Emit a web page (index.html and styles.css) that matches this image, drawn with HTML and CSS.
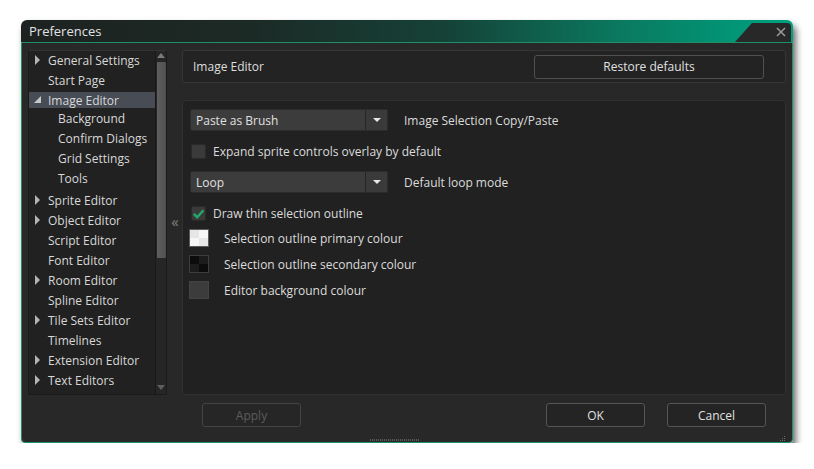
FILE: index.html
```html
<!DOCTYPE html>
<html>
<head>
<meta charset="utf-8">
<title>Preferences</title>
<link rel="stylesheet" href="styles.css">
</head>
<body>
<div class="window">
  <div class="titlebar">
    <span class="title">Preferences</span>
    <div class="notch">
      <svg class="close" width="10" height="10" viewBox="0 0 10 10"><path d="M1 1 L9 9 M9 1 L1 9" stroke="#a0a0a0" stroke-width="1.4" fill="none"/></svg>
    </div>
  </div>
  <div class="frame">
    <div class="main">
      <div class="tree">
        <div class="tree-items">
          <div class="row"><span class="tw closed"></span>General Settings</div>
          <div class="row"><span class="tw"></span>Start Page</div>
          <div class="row selected"><span class="tw open"></span>Image Editor</div>
          <div class="children">
            <div class="row child">Background</div>
            <div class="row child">Confirm Dialogs</div>
            <div class="row child">Grid Settings</div>
            <div class="row child">Tools</div>
          </div>
          <div class="row"><span class="tw closed"></span>Sprite Editor</div>
          <div class="row"><span class="tw closed"></span>Object Editor</div>
          <div class="row"><span class="tw"></span>Script Editor</div>
          <div class="row"><span class="tw"></span>Font Editor</div>
          <div class="row"><span class="tw closed"></span>Room Editor</div>
          <div class="row"><span class="tw"></span>Spline Editor</div>
          <div class="row"><span class="tw closed"></span>Tile Sets Editor</div>
          <div class="row"><span class="tw"></span>Timelines</div>
          <div class="row"><span class="tw closed"></span>Extension Editor</div>
          <div class="row"><span class="tw closed"></span>Text Editors</div>
        </div>
        <div class="scrollbar">
          <span class="sb-up"></span>
          <div class="sb-thumb"></div>
          <span class="sb-down"></span>
        </div>
      </div>
      <div class="splitter">«</div>
      <div class="right">
        <div class="header">
          <span class="header-title">Image Editor</span>
          <button class="btn restore">Restore defaults</button>
        </div>
        <div class="content">
          <div class="opt drop-row">
            <div class="dropdown"><span class="dd-text">Paste as Brush</span><span class="dd-arrow"><span class="tri"></span></span></div>
            <span class="label">Image Selection Copy/Paste</span>
          </div>
          <div class="opt check-row r1">
            <span class="check"></span>
            <span class="label">Expand sprite controls overlay by default</span>
          </div>
          <div class="opt drop-row r2">
            <div class="dropdown"><span class="dd-text">Loop</span><span class="dd-arrow"><span class="tri"></span></span></div>
            <span class="label">Default loop mode</span>
          </div>
          <div class="opt check-row r3">
            <span class="check on"><svg width="13" height="13" viewBox="0 0 13 13"><path d="M1.8 6.8 L5.2 10.2 L11.4 3.2" stroke="#22a86c" stroke-width="2.4" fill="none"/></svg></span>
            <span class="label">Draw thin selection outline</span>
          </div>
          <div class="opt swatch-row r4">
            <span class="swatch light"></span>
            <span class="label">Selection outline primary colour</span>
          </div>
          <div class="opt swatch-row r5">
            <span class="swatch dark"></span>
            <span class="label">Selection outline secondary colour</span>
          </div>
          <div class="opt swatch-row r5">
            <span class="swatch plain"></span>
            <span class="label">Editor background colour</span>
          </div>
        </div>
      </div>
    </div>
    <div class="buttons">
      <button class="btn apply" disabled>Apply</button>
      <span class="spacer"></span>
      <button class="btn ok">OK</button>
      <button class="btn cancel">Cancel</button>
    </div>
    <div class="footer">
      <span class="grip"></span>
      <svg class="resize" width="7" height="7" viewBox="0 0 7 7"><g fill="#6a6a6a"><rect x="5" y="1" width="1" height="1"/><rect x="3" y="3" width="1" height="1"/><rect x="5" y="3" width="1" height="1"/><rect x="1" y="5" width="1" height="1"/><rect x="3" y="5" width="1" height="1"/><rect x="5" y="5" width="1" height="1"/></g></svg>
    </div>
  </div>
</div>
</body>
</html>
```

FILE: styles.css
```css
* { box-sizing: border-box; }

body {
  margin: 0;
  padding: 20px 0 0 21px;
  background: #ffffff;
  font-family: "Open Sans", "Noto Sans", sans-serif;
  font-size: 12px;
  color: #dcdcdc;
}

.window {
  width: 772px;
  border-radius: 6px 6px 4px 4px;
  box-shadow: 3px 5px 7px rgba(0, 0, 0, 0.6);
}

.titlebar {
  position: relative;
  height: 22px;
  display: flex;
  align-items: center;
  padding-left: 8px;
  border-radius: 6px 6px 0 0;
  background: linear-gradient(to right, #1d2220 0%, #1c2a26 30%, #154237 55%, #0a7a60 78%, #009c7c 96%, #00a080 100%);
}

.title {
  font-size: 13px;
  color: #e2e2e2;
}

.notch {
  position: absolute;
  right: 2px;
  top: 3px;
  bottom: 0;
  width: 56px;
  background: #282828;
  clip-path: polygon(17px 0, 100% 0, 100% 100%, 0 100%);
  border-top-right-radius: 4px;
}

.close {
  position: absolute;
  right: 5px;
  top: 4px;
}

.frame {
  height: 401px;
  border: 1px solid #1f9067;
  border-radius: 0 0 4px 4px;
  background: #282828;
  padding: 7px 6px 0 6px;
  display: flex;
  flex-direction: column;
}

.main {
  height: 345px;
  display: grid;
  grid-template-columns: 139px 15px 1fr;
}

/* tree */
.tree {
  display: flex;
  background: #212121;
  border: 1px solid #1a1a1a;
  border-top-color: #333;
  border-radius: 2px;
}

.tree-items {
  flex: 1;
  margin-top: -1px;
}

.row {
  height: 20px;
  display: flex;
  align-items: center;
  padding-left: 5px;
  white-space: nowrap;
  color: #d8d8d8;
}

.row.selected {
  border-top: 2px solid transparent;
  border-bottom: 2px solid transparent;
  background: #474c55;
  background-clip: padding-box;
}

.children {
  margin-top: -2px;
  margin-bottom: 2px;
}

.row.child {
  padding-left: 29px;
}

.tw {
  width: 14px;
  height: 10px;
  flex: none;
  position: relative;
}

.tw.closed::before {
  content: "";
  position: absolute;
  left: 1px;
  top: 0;
  border-left: 5px solid #b4b4b4;
  border-top: 5px solid transparent;
  border-bottom: 5px solid transparent;
}

.tw.open::before {
  content: "";
  position: absolute;
  left: 0;
  top: 1px;
  border-right: 7px solid #c8c8c8;
  border-top: 7px solid transparent;
}

.scrollbar {
  width: 11px;
  border-left: 1px solid #181818;
  background: #262626;
  display: flex;
  flex-direction: column;
  align-items: center;
}

.sb-up {
  margin-top: 2px;
  border-bottom: 5px solid #7a7a7a;
  border-left: 4px solid transparent;
  border-right: 4px solid transparent;
}

.sb-thumb {
  margin-top: 4px;
  width: 9px;
  height: 196px;
  background: linear-gradient(to right, #5e5e5e, #505050);
  border-radius: 1px;
}

.sb-down {
  margin-top: auto;
  margin-bottom: 4px;
  border-top: 5px solid #5e5e5e;
  border-left: 4px solid transparent;
  border-right: 4px solid transparent;
}

.splitter {
  display: flex;
  align-items: center;
  justify-content: center;
  color: #808080;
  font-size: 15px;
  padding-bottom: 3px;
  padding-left: 1px;
}

/* right column */
.right {
  display: flex;
  flex-direction: column;
  gap: 17px;
}

.header {
  height: 33px;
  display: flex;
  align-items: center;
  justify-content: space-between;
  padding: 0 21px 0 10px;
  background: #232323;
  border: 1px solid #363636;
  border-radius: 3px;
}

.header-title {
  color: #dedede;
}

.btn {
  font-family: "Open Sans", "Noto Sans", sans-serif;
  font-size: 12px;
  height: 24px;
  background: #232323;
  border: 1px solid #505050;
  border-radius: 3px;
  color: #e0e0e0;
  padding: 0;
}

.restore {
  width: 230px;
}

.content {
  flex: 1;
  background: #212121;
  border: 1px solid #303030;
  border-radius: 3px;
  padding: 8px 0 0 7px;
  display: flex;
  flex-direction: column;
}

.opt {
  display: flex;
  align-items: center;
}

.label {
  color: #dcdcdc;
  white-space: nowrap;
}

.drop-row .label {
  margin-left: 16px;
}

.dropdown {
  width: 198px;
  height: 22px;
  display: flex;
  background: #3c3c3c;
  border: 1px solid #2c2c2c;
  border-radius: 2px;
}

.dd-text {
  flex: 1;
  display: flex;
  align-items: center;
  padding-left: 5px;
  color: #e0e0e0;
}

.dd-arrow {
  width: 22px;
  border-left: 1px solid #262626;
  background: #3a3a3a;
  display: flex;
  align-items: center;
  justify-content: center;
}

.tri {
  border-top: 4px solid #e8e8e8;
  border-left: 4px solid transparent;
  border-right: 4px solid transparent;
}

.check-row {
  padding-left: 1px;
}

.check {
  width: 15px;
  height: 15px;
  background: #3a3a3a;
  border: 1px solid #2a2a2a;
  border-radius: 2px;
  margin-right: 7px;
  display: flex;
  align-items: center;
  justify-content: center;
}

.r1 { margin-top: 12px; }
.r2 { margin-top: 11px; }
.r3 { margin-top: 12px; }
.r4 { margin-top: 7px; }
.r5 { margin-top: 8px; }

.swatch-row {
  margin-left: -1px;
}

.swatch {
  width: 20px;
  height: 18px;
  border: 1px solid #555;
  margin-right: 15px;
}

.swatch.light {
  background:
    linear-gradient(#e6e6e6, #e6e6e6) 9px 8px / 9px 8px no-repeat,
    linear-gradient(#e6e6e6, #e6e6e6) 0 0 / 9px 8px no-repeat,
    #f6f6f6;
  border-color: #5a5a5a;
}

.swatch.dark {
  background:
    linear-gradient(#0c0c0c, #0c0c0c) 9px 8px / 9px 8px no-repeat,
    linear-gradient(#0c0c0c, #0c0c0c) 0 0 / 9px 8px no-repeat,
    #1c1c1c;
  border-color: #3e3e3e;
}

.swatch.plain {
  background: #3c3c3c;
  border-color: #444;
}

.buttons {
  margin-top: 8px;
  height: 24px;
  display: flex;
  padding-left: 174px;
  padding-right: 20px;
  gap: 22px;
}

.buttons .btn {
  width: 99px;
}

.spacer { flex: 1; }

.apply {
  color: #5c5c5c;
  border-color: #444;
  background: #262626;
}

.ok, .cancel {
  background: #242424;
  border-color: #555;
}

.footer {
  flex: 1;
  position: relative;
  display: flex;
  align-items: flex-end;
}

.grip {
  margin-left: 342px;
  margin-bottom: 1px;
  width: 50px;
  height: 2px;
  background: repeating-linear-gradient(to right, #5a5a5a 0 1px, transparent 1px 2px);
}

.resize {
  position: absolute;
  right: 0;
  bottom: 0;
}
```
